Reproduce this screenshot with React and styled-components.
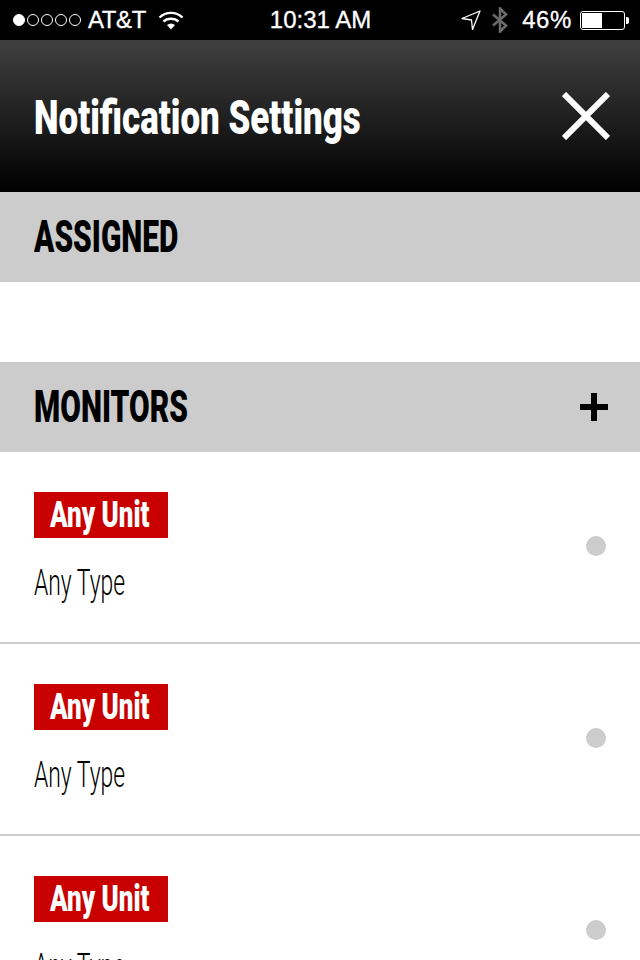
import React from "react";
import styled, { createGlobalStyle } from "styled-components";

const GlobalStyle = createGlobalStyle`
  html, body {
    margin: 0;
    padding: 0;
    background: #fff;
  }
`;

const Screen = styled.div`
  width: 640px;
  height: 960px;
  overflow: hidden;
  background: #fff;
`;

//status bar
const StatusBar = styled.div`
  height: 40px;
  background: #000;
  color: #fff;
  display: grid;
  grid-template-columns: 1fr auto 1fr;
  align-items: center;
  padding: 0 15px 0 13px;
  font-family: "Liberation Sans", Arial, sans-serif;
  font-size: 24px;
`;

const StatusLeft = styled.div`
  display: flex;
  align-items: center;
`;

const StatusRight = styled.div`
  display: flex;
  align-items: center;
  justify-content: flex-end;
`;

const Signal = styled.div`
  display: flex;
  gap: 2px;
  margin-right: 7px;
`;

const SignalDot = styled.span`
  width: 12px;
  height: 12px;
  box-sizing: border-box;
  border-radius: 50%;
  border: 1px solid #fff;
  background: ${(props) => (props.$on ? "#fff" : "transparent")};
`;

const Carrier = styled.span`
  letter-spacing: -0.4px;
  -webkit-text-stroke: 0.3px #fff;
`;

const Clock = styled.span`
  margin-left: 3px;
  -webkit-text-stroke: 0.3px #fff;
`;

const Percent = styled.span`
  margin: 0 8px 0 14px;
  letter-spacing: 0.6px;
  -webkit-text-stroke: 0.3px #fff;
`;

const WifiIcon = styled.svg`
  margin-left: 12px;
`;

const Battery = styled.div`
  width: 45px;
  height: 19px;
  box-sizing: border-box;
  border: 1px solid #fff;
  border-radius: 3px;
  padding: 1px;
  position: relative;
  &::after {
    content: "";
    position: absolute;
    right: -5px;
    top: 5px;
    width: 3px;
    height: 7px;
    background: #fff;
    border-radius: 0 2px 2px 0;
  }
`;

const BatteryFill = styled.div`
  width: 20px;
  height: 100%;
  background: #fff;
`;

//header
const Header = styled.header`
  height: 152px;
  background: linear-gradient(to bottom, #404040, #000);
  display: flex;
  align-items: center;
  justify-content: space-between;
  padding: 0 30px 0 34px;
  color: #fff;
`;

const Condensed = styled.span`
  display: inline-block;
  font-family: Roboto, "Liberation Sans", sans-serif;
  font-weight: ${(props) => props.$weight || 900};
  font-size: ${(props) => props.$size}px;
  line-height: 1;
  white-space: nowrap;
  transform: scaleX(${(props) => props.$squeeze});
  transform-origin: left center;
`;

const Title = styled(Condensed).attrs({ as: "h1" })`
  margin: 3px 0 0;
`;

const SectionBar = styled.div`
  height: 90px;
  background: #ccc;
  display: flex;
  align-items: center;
  justify-content: space-between;
  padding: 0 32px 0 34px;
  color: #000;
`;

const Spacer = styled.div`
  height: 80px;
`;

const Row = styled.div`
  height: 192px;
  box-sizing: border-box;
  border-bottom: 2px solid #ccc;
  display: flex;
  align-items: flex-start;
  justify-content: space-between;
  padding: 40px 34px 0;
`;

const RowBody = styled.div`
  display: flex;
  flex-direction: column;
  align-items: flex-start;
`;

const UnitTag = styled.div`
  width: 134px;
  height: 46px;
  box-sizing: border-box;
  background: #c80000;
  color: #fff;
  padding-left: 16px;
  display: flex;
  align-items: center;
`;

const TypeLabel = styled.div`
  margin-top: 27px;
  color: #000;
  height: 36px;
  display: flex;
  align-items: center;
`;

const Dot = styled.span`
  width: 20px;
  height: 20px;
  border-radius: 50%;
  background: #ccc;
  margin-top: 44px;
  flex: none;
`;

function App() {
  const rows = [0, 1, 2];
  return (
    <Screen>
      <GlobalStyle />
      <StatusBar>
        <StatusLeft>
          <Signal>
            <SignalDot $on />
            <SignalDot />
            <SignalDot />
            <SignalDot />
            <SignalDot />
          </Signal>
          <Carrier>AT&amp;T</Carrier>
          <WifiIcon width="26" height="20" viewBox="0 0 26 20" fill="none">
            <path d="M1.5 7.5C8 1.3 18 1.3 24.5 7.5" stroke="#fff" strokeWidth="2.4" />
            <path d="M5.5 11.5C9.5 7.8 16.5 7.8 20.5 11.5" stroke="#fff" strokeWidth="2.4" />
            <path d="M9 15C11.5 13 14.5 13 17 15L13 19.5Z" fill="#fff" />
          </WifiIcon>
        </StatusLeft>
        <Clock>10:31 AM</Clock>
        <StatusRight>
          <svg width="20" height="20" viewBox="0 0 20 20" fill="none">
            <path d="M1 8.5L19 1L11.5 19.5L10.5 10Z" stroke="#fff" strokeWidth="1.3" strokeLinejoin="round" />
          </svg>
          <svg width="16" height="26" viewBox="0 0 16 26" fill="none" style={{ marginLeft: 11 }}>
            <path d="M1 7.5L14 18.5L8 24.5V1.5L14 7.5L1 18.5" stroke="#6a6a6a" strokeWidth="2.6" />
          </svg>
          <Percent>46%</Percent>
          <Battery>
            <BatteryFill />
          </Battery>
        </StatusRight>
      </StatusBar>

      <Header>
        <Title $size={48} $squeeze={0.728}>Notification Settings</Title>
        <svg width="48" height="48" viewBox="0 0 48 48">
          <path d="M2 2L46 46M46 2L2 46" stroke="#fff" strokeWidth="6" strokeLinecap="butt" />
        </svg>
      </Header>

      <SectionBar>
        <Condensed $size={44} $squeeze={0.68}>ASSIGNED</Condensed>
      </SectionBar>
      <Spacer />
      <SectionBar>
        <Condensed $size={44} $squeeze={0.68}>MONITORS</Condensed>
        <svg width="28" height="28" viewBox="0 0 28 28">
          <path d="M11 0h6v11h11v6H17v11h-6V17H0v-6h11z" fill="#000" />
        </svg>
      </SectionBar>

      {rows.map((row) => (
        <Row key={row}>
          <RowBody>
            <UnitTag>
              <Condensed $size={36} $squeeze={0.72}>Any Unit</Condensed>
            </UnitTag>
            <TypeLabel>
              <Condensed $size={36} $weight={300} $squeeze={0.635}>Any Type</Condensed>
            </TypeLabel>
          </RowBody>
          <Dot />
        </Row>
      ))}
    </Screen>
  );
}

export default App;
